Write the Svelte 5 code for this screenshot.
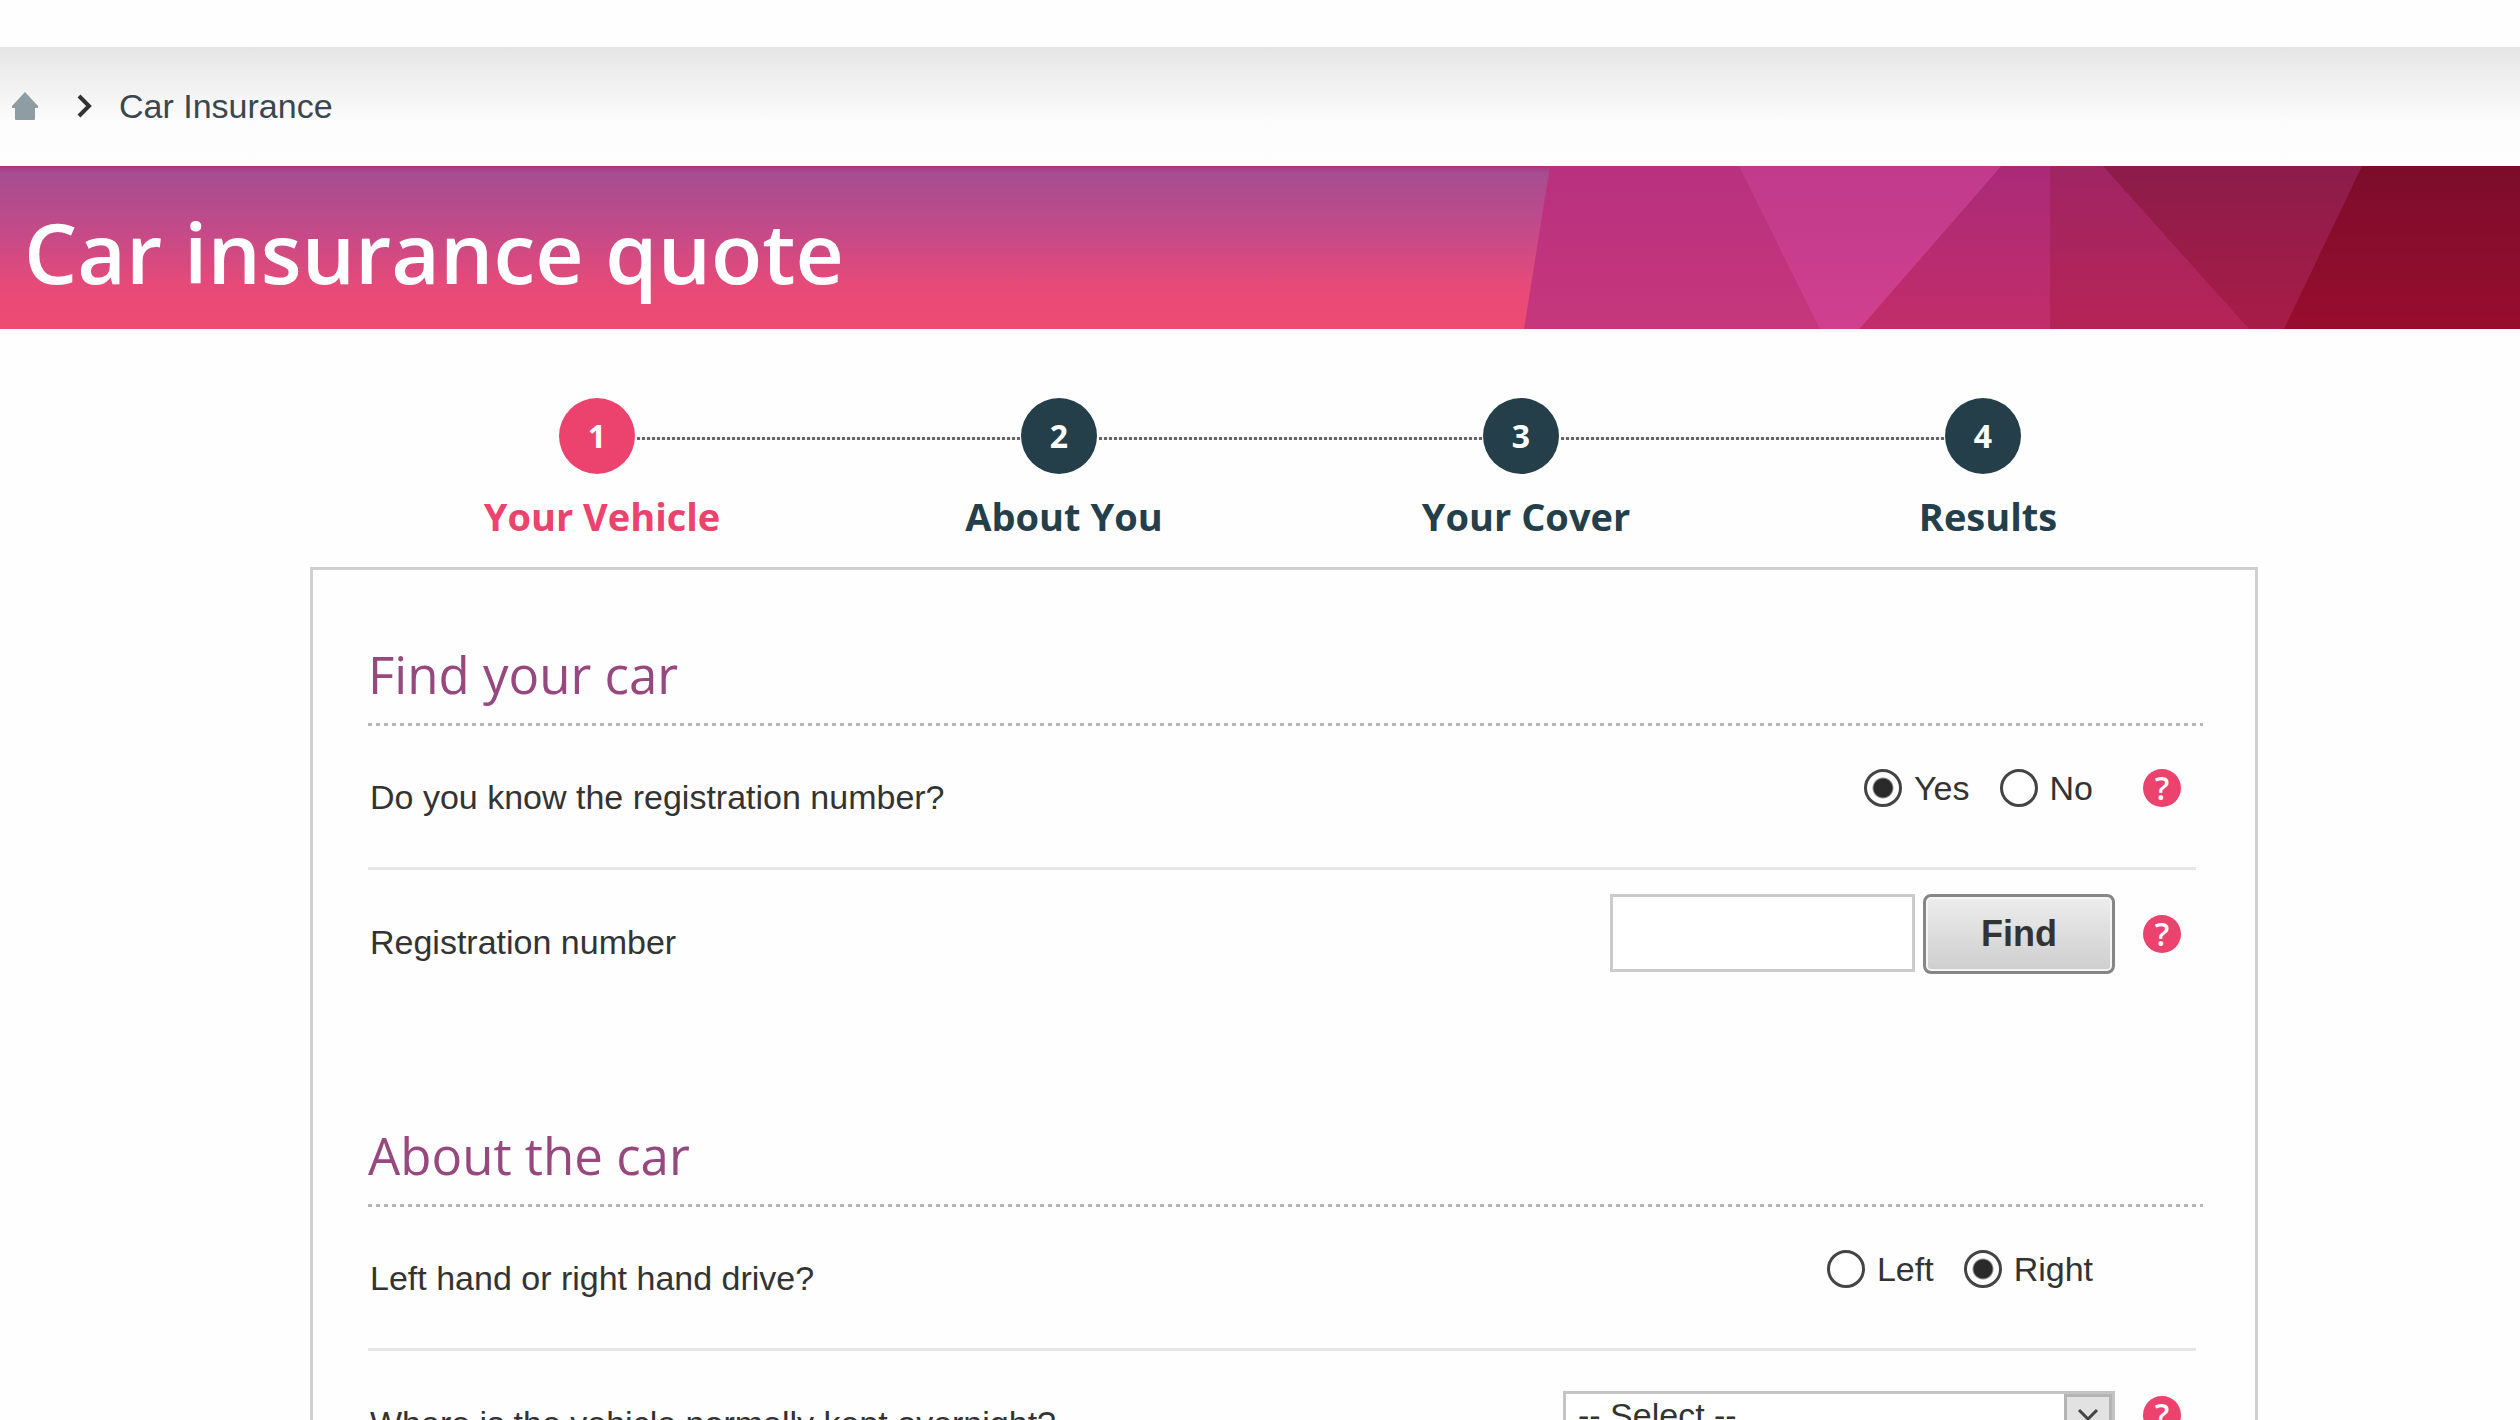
<script>
  const steps = ['Your Vehicle', 'About You', 'Your Cover', 'Results'];
  let current = $state(0);
  let knowsReg = $state('Yes');
  let drive = $state('Right');
  let reg = $state('');
  let overnight = $state('');
</script>

{#snippet help(topic)}
  <button class="help" type="button" aria-label={`Help: ${topic}`}>?</button>
{/snippet}

<div class="page">
  <nav class="crumbs" aria-label="Breadcrumb">
    <a class="home" href="#home" aria-label="Home">
      <svg width="28" height="30" viewBox="0 0 28 30" aria-hidden="true">
        <path d="M14 1 27 15V17H24V28Q24 29 23 29H5Q4 29 4 28V17H1V15Z" fill="#8d9da3" />
      </svg>
    </a>
    <svg width="16" height="24" viewBox="0 0 16 24" aria-hidden="true">
      <path d="M3 2 13 12 3 22" fill="none" stroke="#333" stroke-width="4" />
    </svg>
    <a class="crumb" href="#car">Car Insurance</a>
  </nav>

  <header class="banner">
    <h1>Car insurance quote</h1>
    <svg class="facets" width="996" height="163" viewBox="0 0 996 163" preserveAspectRatio="none" aria-hidden="true">
      <defs>
        <linearGradient id="f1" x1="0" y1="0" x2="0" y2="1"><stop offset="0" stop-color="#b8307f" /><stop offset="1" stop-color="#c6377c" /></linearGradient>
        <linearGradient id="f2" x1="0" y1="0" x2="0" y2="1"><stop offset="0" stop-color="#c03a8b" /><stop offset="1" stop-color="#d0408f" /></linearGradient>
        <linearGradient id="f3" x1="0" y1="0" x2="0" y2="1"><stop offset="0" stop-color="#aa2a78" /><stop offset="1" stop-color="#c22d6a" /></linearGradient>
        <linearGradient id="f4" x1="0" y1="0" x2="0" y2="1"><stop offset="0" stop-color="#9f2563" /><stop offset="1" stop-color="#b62456" /></linearGradient>
        <linearGradient id="f5" x1="0" y1="0" x2="0" y2="1"><stop offset="0" stop-color="#8c1c4a" /><stop offset="1" stop-color="#a81c47" /></linearGradient>
        <linearGradient id="f6" x1="0" y1="0" x2="0" y2="1"><stop offset="0" stop-color="#7c0c2b" /><stop offset="1" stop-color="#980d2e" /></linearGradient>
      </defs>
      <path d="M26 0H240L300 163H0Z" fill="url(#f1)" />
      <path d="M477 0H530V163H335Z" fill="url(#f3)" />
      <path d="M215 0H477L335 163H296Z" fill="url(#f2)" />
      <path d="M526 0H600L740 163H526Z" fill="url(#f4)" />
      <path d="M579 0H840L762 163H725Z" fill="url(#f5)" />
      <path d="M838 0H996V163H760Z" fill="url(#f6)" />
    </svg>
  </header>

  <ol class="steps">
    {#each steps as name, i}
      <li class:active={i === current}>
        <button type="button" onclick={() => (current = i)} aria-current={i === current ? 'step' : undefined}>
          <span class="num">{i + 1}</span>
          <span class="name">{name}</span>
        </button>
      </li>
    {/each}
  </ol>

  <form class="card" onsubmit={(e) => e.preventDefault()}>
    <section>
      <h2>Find your car</h2>
      <div class="row">
        <span class="question" id="q-know">Do you know the registration number?</span>
        <div class="controls">
          <div class="radios" role="radiogroup" aria-labelledby="q-know">
            {#each ['Yes', 'No'] as option}
              <label><input type="radio" name="know" value={option} bind:group={knowsReg} />{option}</label>
            {/each}
          </div>
          {@render help('registration number known')}
        </div>
      </div>
      <div class="row">
        <label class="question" for="reg">Registration number</label>
        <div class="controls">
          <div class="lookup">
            <input id="reg" type="text" bind:value={reg} />
            <button class="find" type="submit">Find</button>
          </div>
          {@render help('registration number')}
        </div>
      </div>
    </section>

    <section>
      <h2>About the car</h2>
      <div class="row">
        <span class="question" id="q-drive">Left hand or right hand drive?</span>
        <div class="controls">
          <div class="radios" role="radiogroup" aria-labelledby="q-drive">
            {#each ['Left', 'Right'] as option}
              <label><input type="radio" name="drive" value={option} bind:group={drive} />{option}</label>
            {/each}
          </div>
        </div>
      </div>
      <div class="row">
        <label class="question" for="overnight">Where is the vehicle normally kept overnight?</label>
        <div class="controls">
          <div class="select">
            <select id="overnight" bind:value={overnight}>
              <option value="">-- Select --</option>
            </select>
            <span class="arrow">
              <svg width="24" height="16" viewBox="0 0 24 16" aria-hidden="true">
                <path d="M3 3 12 12 21 3" fill="none" stroke="#444" stroke-width="3" />
              </svg>
            </span>
          </div>
          {@render help('overnight parking')}
        </div>
      </div>
    </section>
  </form>
</div>

<style>
  :global(body) {
    background: #fefefe;
  }
  .page {
    box-sizing: border-box;
    height: 100vh;
    overflow: hidden;
    padding-top: 47px;
    font: 34px/40px 'Liberation Sans', Arial, sans-serif;
    color: #333;
  }
  .page * {
    box-sizing: border-box;
  }
  button,
  input,
  select {
    font: inherit;
    color: inherit;
    margin: 0;
  }
  .crumbs {
    display: flex;
    align-items: center;
    height: 119px;
    padding: 0 11px 2px;
    background: linear-gradient(#e5e5e5, #f2f2f2 35%, #fcfcfc 62%, #fefefe);
  }
  .crumbs svg {
    display: block;
  }
  .home {
    margin-right: 37px;
  }
  .crumb {
    margin-left: 27px;
    color: #3a4650;
    text-decoration: none;
  }
  .banner {
    display: flex;
    justify-content: space-between;
    align-items: center;
    height: 163px;
    padding-left: 24px;
    background: linear-gradient(#b03080, #a64d92 4%, #c44a88 40%, #e84a78 75%, #ee4b70);
  }
  h1 {
    margin: 0;
    padding-top: 8px;
    font: 600 84px/100px 'Open Sans', sans-serif;
    color: #fff;
    white-space: nowrap;
  }
  .facets {
    flex: none;
    height: 100%;
  }
  .steps {
    display: grid;
    grid-template-columns: repeat(4, 1fr);
    list-style: none;
    margin: 0;
    padding: 69px 306px 0 366px;
  }
  .steps li {
    position: relative;
    color: #243f4a;
  }
  .steps li + li::before {
    content: '';
    position: absolute;
    top: 39px;
    right: calc(50% + 38px);
    width: calc(100% - 78px);
    height: 3px;
    background: repeating-linear-gradient(90deg, #666 0 3px, #eee 3px 5px);
  }
  .steps button {
    display: flex;
    flex-direction: column;
    align-items: center;
    width: 100%;
    padding: 0;
    border: 0;
    background: none;
    font: 700 38px/48px 'Open Sans', sans-serif;
    cursor: pointer;
  }
  .num {
    width: 76px;
    height: 76px;
    border-radius: 50%;
    background: #243f4a;
    color: #fff;
    font-size: 32px;
    line-height: 76px;
  }
  .name {
    margin: 18px 0 27px;
    padding-left: 10px;
  }
  .steps .active {
    color: #ec436e;
  }
  .active .num {
    background: #ec436e;
  }
  .card {
    margin: 0 262px 0 310px;
    padding: 72px 52px 80px 55px;
    border: 3px solid #cfcfcf;
  }
  h2 {
    margin: 0;
    padding-bottom: 20px;
    font: 400 51px/64px 'Open Sans', sans-serif;
    color: #96487f;
    background: repeating-linear-gradient(90deg, #b8b8b8 0 4px, transparent 4px 8px) bottom / 100% 3px no-repeat;
  }
  section + section {
    margin-top: 109px;
  }
  .row {
    display: flex;
    justify-content: space-between;
    align-items: center;
    min-height: 144px;
    margin-right: 7px;
    padding-left: 2px;
  }
  .row:not(:last-child) {
    border-bottom: 3px solid #e6e6e6;
  }
  .controls {
    display: grid;
    grid-template-columns: auto 38px;
    column-gap: 28px;
    align-items: center;
    padding: 0 15px 17px 0;
  }
  .radios {
    display: flex;
    gap: 30px;
    padding-right: 22px;
  }
  .radios label {
    display: flex;
    align-items: center;
    gap: 12px;
  }
  input[type='radio'] {
    appearance: none;
    width: 38px;
    height: 38px;
    border: 3px solid #444;
    border-radius: 50%;
    background: #fff;
  }
  input[type='radio']:checked {
    background: radial-gradient(circle, #2a2a2a 9px, #fff 11px);
  }
  .help {
    width: 38px;
    height: 38px;
    padding: 0;
    border: 0;
    border-radius: 50%;
    background: #ec436e;
    color: #fff;
    font: 600 32px/38px 'Open Sans', sans-serif;
    cursor: pointer;
  }
  .lookup {
    display: flex;
    gap: 8px;
  }
  .lookup input {
    width: 305px;
    height: 78px;
    padding: 0 12px;
    border: 3px solid #cbcbcb;
    background: #fff;
  }
  .find {
    width: 192px;
    height: 80px;
    border: 3px solid #868686;
    border-radius: 8px;
    background: linear-gradient(#ededed, #cecece);
    box-shadow: inset 0 0 0 2px #f4f4f4;
    font-size: 36px;
    font-weight: 700;
    cursor: pointer;
  }
  .select {
    display: grid;
    grid-template-columns: 1fr 48px;
    width: 552px;
    height: 48px;
    border: 3px solid #c4c4c4;
  }
  select {
    grid-area: 1 / 1 / 2 / 3;
    appearance: none;
    padding: 0 60px 0 12px;
    border: 0;
    background: #fff;
  }
  .arrow {
    grid-area: 1 / 2;
    display: grid;
    place-items: center;
    border: 3px solid #b4b4b4;
    background: #e2e2e2;
    pointer-events: none;
  }
</style>
